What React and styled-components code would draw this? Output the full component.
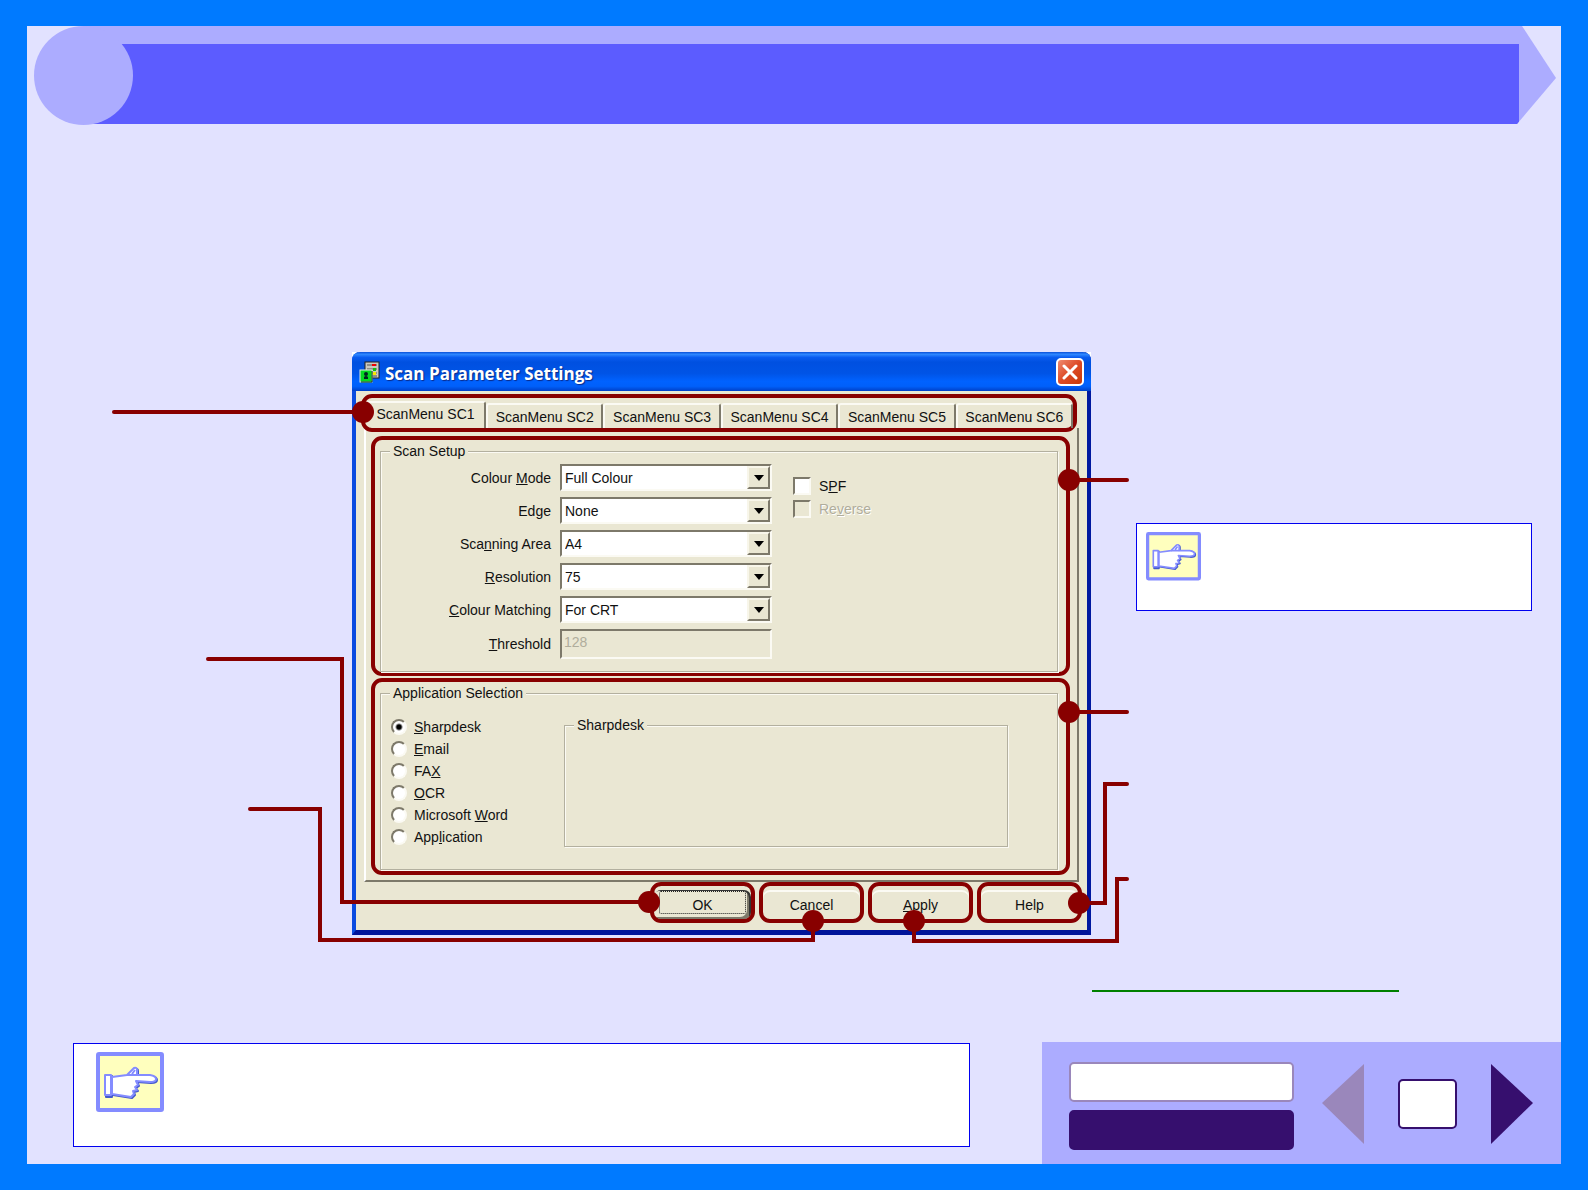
import { useState } from 'react';
import styled, { createGlobalStyle, css } from 'styled-components';

const colors = {
    frame: '#007aff',
    page: '#e2e2ff',
    lilac: '#acacff',
    violet: '#5c5cff',
    purple: '#360f6e',
    mauve: '#9a87bb',
    face: '#eae7d3',
    shadow: '#7d796a',
    edge: '#b3b09f',
    mark: '#880000',
}

const GlobalStyle = createGlobalStyle`
    *, *::before, *::after {
        box-sizing: border-box;
    }
    body {
        margin: 0;
        background: ${colors.frame};
        font-family: "Liberation Sans", Arial, sans-serif;
        font-size: 14px;
        line-height: 18px;
        color: #111;
    }
    button, input, select {
        font: inherit;
        color: inherit;
        margin: 0;
    }
`

const Page = styled.div`
    display: flex;
    flex-direction: column;
    min-height: 100vh;
    border: solid ${colors.frame};
    border-width: 26px 27px;
    background: ${colors.page};
`

const Header = styled.header`
    position: relative;
    padding: 0 5px 0 57px;
`

const Disc = styled.div`
    position: absolute;
    top: 0;
    left: 7px;
    width: 99px;
    height: 99px;
    border-radius: 50%;
    background: ${colors.lilac};
`

const Arrow = styled.div`
    padding: 18px 37px 0 0;
    background: ${colors.lilac};
    clip-path: polygon(0 0, calc(100% - 34px) 0, 100% 52px, calc(100% - 39px) 100%, 0 100%);
`

const Stripe = styled.div`
    height: 80px;
    background: ${colors.violet};
`

const Figure = styled.main`
    display: grid;
    grid-template-columns: 325px 739px minmax(0, 1fr);
    align-items: start;
    margin-top: 228px;
`

const Stage = styled.div`
    position: relative;
    grid-column: 2;
    background: #fff;
`

const Leaders = styled.svg`
    position: absolute;
    top: 0;
    left: 0;
    width: 100%;
    height: 100%;
    overflow: visible;
    pointer-events: none;
`

const Window = styled.section`
    border: solid #0a4be0;
    border-width: 0 4px 5px;
    border-right-color: #0018a0;
    border-bottom-color: #00149a;
    border-radius: 8px 8px 0 0;
    background: ${colors.face};
`

const TitleBar = styled.div`
    display: flex;
    align-items: center;
    gap: 5px;
    height: 39px;
    margin: 0 -4px;
    padding: 0 7px;
    border-radius: 8px 8px 0 0;
    background: linear-gradient(#0a50d8 0, #2f88ff 6%, #0a5cf0 14%, #0050e0 26%, #0054e6 55%, #0062ff 75%, #0060fa 88%, #0040c8 100%);
`

const Title = styled.h1`
    flex: 1;
    margin: 0;
    padding-top: 5px;
    color: #fff;
    font: bold 17px/24px "Open Sans", "Noto Sans", sans-serif;
    text-shadow: 1px 1px 1px #0a2a88;
`

const Close = styled.button`
    display: grid;
    place-items: center;
    width: 28px;
    height: 28px;
    padding: 0;
    border: 2px solid #fff;
    border-radius: 5px;
    background: linear-gradient(135deg, #ee8a70, #dd4a26 50%, #c83808);
`

// The dark red outline around every part that a leader points at
const marked = css`
    border: 4px solid ${colors.mark};
    border-radius: 11px;
`

const TabList = styled.div`
    ${marked}
    position: relative;
    display: flex;
    align-items: flex-end;
    height: 38px;
    margin: 3px 10px 0 5px;
`

const Tab = styled.button`
    flex: 1;
    height: 25px;
    padding: 1px 0 0;
    border: 0;
    border-top: 2px solid #fbfaf3;
    border-left: 2px solid #fbfaf3;
    border-right: 2px solid ${colors.shadow};
    border-radius: 3px 3px 0 0;
    background: none;
    white-space: nowrap;

    ${p => p.$active && css`
        flex: 0 0 121px;
        height: 27px;
        padding: 0 0 3px;
        border-left-color: transparent;
    `}
`

const TabPanel = styled.div`
    display: flex;
    flex-direction: column;
    gap: 2px;
    margin: -4px 8px 0;
    padding: 8px 7px 5px 5px;
    border: 2px solid ${colors.shadow};
    border-top: 0;
    border-left-color: #fff;
`

const Marked = styled.div`
    ${marked}
    padding: ${p => p.$padding};
`

const Group = styled.fieldset`
    min-width: 0;
    margin: 0;
    padding: 0;
    border: 1px solid ${colors.edge};
    box-shadow: 1px 1px 0 #fbfaf3, inset 1px 1px 0 #fbfaf3;
`

const Legend = styled.legend`
    margin-left: 9px;
    padding: 0 3px;
    background: ${colors.face};
`

const Setup = styled.div`
    display: grid;
    grid-template-columns: 391px 1fr;
    gap: 21px;
    padding: 4px 0 12px;
`

const Fields = styled.div`
    display: grid;
    grid-template-columns: 170px 1fr;
    gap: 6px 9px;
    align-items: center;
`

const FieldLabel = styled.label`
    text-align: right;
`

const sunken = css`
    border: 2px solid #fbfaf3;
    border-top-color: ${colors.shadow};
    border-left-color: ${colors.shadow};
`

const SelectBox = styled.div`
    ${sunken}
    display: grid;
    grid-template-columns: 1fr 23px;
    height: 27px;
    background: #fff;
`

const Select = styled.select`
    grid-area: 1 / 1 / 2 / 3;
    width: 100%;
    padding: 1px 3px 0;
    border: 0;
    background: none;
    appearance: none;
    outline: 0;
`

const DropButton = styled.span`
    grid-area: 1 / 2;
    display: grid;
    place-items: center;
    border: 2px solid ${colors.shadow};
    border-top-color: #f8f6ea;
    border-left-color: #f8f6ea;
    background: ${colors.face};
    pointer-events: none;
`

const TextInput = styled.input`
    ${sunken}
    width: 100%;
    height: 30px;
    padding: 0 2px 5px;
    background: ${colors.face};
    color: #b0ad9c;
`

const Checks = styled.div`
    display: flex;
    flex-direction: column;
    gap: 5px;
    padding-top: 13px;
`

const Option = styled.label`
    display: flex;
    align-items: center;
    gap: ${p => p.$gap};
    height: ${p => p.$height};
    ${p => p.$disabled && 'color: #b0ad9c; text-shadow: 1px 1px 0 #fff;'}
`

const Checkbox = styled.input`
    ${sunken}
    appearance: none;
    width: 18px;
    height: 18px;
    background: ${p => p.disabled ? colors.face : '#fff'};

    &:checked {
        box-shadow: inset 0 0 0 3px #fff, inset 0 0 0 9px #111;
    }
`

const Radio = styled.input`
    ${sunken}
    appearance: none;
    width: 16px;
    height: 16px;
    border-radius: 50%;
    background: #fff;

    &:checked {
        background: radial-gradient(circle, #000 0 2px, #fff 4px);
    }
`

const Applications = styled.div`
    display: grid;
    grid-template-columns: 183px 1fr;
    padding: 14px 49px 21px 0;
`

const RadioList = styled.div`
    padding-left: 10px;
`

const Preview = styled(Group)`
    height: 131px;
`

const Actions = styled.div`
    display: flex;
    justify-content: flex-end;
    gap: 4px;
    padding: 0 5px 7px;
`

const Action = styled.button`
    ${marked}
    width: 105px;
    height: 41px;
    padding: 5px 0 0;
    background: ${colors.face};
    box-shadow: inset 0 4px 0 ${colors.face}, inset 0 6px 0 #fbfaf3;

    ${p => p.$isDefault && css`
        box-shadow: inset 0 4px 0 ${colors.face}, inset -2px 5px 0 #333, inset -4px -2px 0 ${colors.shadow};
        outline: 1px dotted #222;
        outline-offset: -10px;
    `}
`

const Note = styled.aside`
    border: 1px solid #0000f0;
    background: #fff;
`

const SideNote = styled(Note)`
    height: 88px;
    margin: 171px 29px 0 45px;
    padding: 8px 9px;
`

const FootNote = styled(Note)`
    flex: 1;
    height: 104px;
    margin: 1px 72px 0 46px;
    padding: 8px 22px;
`

const HandIcon = styled.svg`
    display: block;
    width: ${p => p.$width};
`

const MoreLink = styled.a`
    width: 307px;
    height: 24px;
    margin: 33px 0 50px 1065px;
    border-bottom: 2px solid #008000;
`

const Footer = styled.footer`
    display: flex;
    align-items: flex-start;
    margin-top: auto;
`

const Pager = styled.nav`
    display: flex;
    align-items: center;
    gap: 28px;
    height: 122px;
    padding: 2px 28px 0 27px;
    background: ${colors.lilac};
`

const PagerLinks = styled.div`
    display: flex;
    flex-direction: column;
    gap: 8px;
    padding-top: 4px;
`

const PagerButton = styled.button`
    width: 225px;
    height: 40px;
    border: 2px solid ${p => p.$dark ? colors.purple : colors.mauve};
    border-radius: 5px;
    background: ${p => p.$dark ? colors.purple : '#fff'};
`

const Steps = styled.div`
    display: flex;
    align-items: center;
    gap: 34px;
`

const Step = styled.button`
    padding: 0;
    border: 0;
    background: none;
    color: ${p => p.$dim ? colors.mauve : colors.purple};

    svg {
        display: block;
    }
`

const PageNumber = styled.output`
    width: 59px;
    height: 50px;
    border: 2px solid ${colors.purple};
    border-radius: 5px;
    background: #fff;
`

const TABS = ['ScanMenu SC1', 'ScanMenu SC2', 'ScanMenu SC3', 'ScanMenu SC4', 'ScanMenu SC5', 'ScanMenu SC6']

// an underscore stands before the access key
const FIELDS = [
    { id: 'mode', label: 'Colour _Mode', value: 'Full Colour' },
    { id: 'edge', label: 'Ed_ge', value: 'None' },
    { id: 'area', label: 'Sca_nning Area', value: 'A4' },
    { id: 'resolution', label: '_Resolution', value: '75' },
    { id: 'matching', label: '_Colour Matching', value: 'For CRT' },
]

const APPLICATIONS = ['_Sharpdesk', '_Email', 'FA_X', '_OCR', 'Microsoft _Word', 'App_lication']

const LEADERS = [
    { dot: [11, 60], path: 'M-238 60H11' },
    { dot: [717, 128], path: 'M775 128H717' },
    { dot: [717, 360], path: 'M775 360H717' },
    { dot: [297, 550], path: 'M-144 307H-10V550H297' },
    { dot: [461, 569], path: 'M-102 457H-32V588H461V569' },
    { dot: [562, 569], path: 'M775 527H765V589H562V569' },
    { dot: [727, 551], path: 'M775 432H753V551H727' },
]

function KeyText({ children }) {
    const [before, after] = children.split('_')
    return (
        <span>{before}<u>{after[0]}</u>{after.slice(1)}</span>
    )
}

function Hand({ width }) {
    const shape = 'M16 25L31 23L38 16Q41 15 41 18L41 23L54 23Q60 24 60 27Q60 30 54 30L40 29L42 33L39 35L41 38L37 39L38 42L35 45L16 42Z'
    return (
        <HandIcon $width={width} viewBox="0 0 68 60" aria-hidden="true">
            <rect x="2" y="2" width="64" height="56" rx="1" fill="#ffffbe" stroke="#848cff" strokeWidth="4" />
            <g transform="translate(1 1)" fill="#4459cc" stroke="#4459cc" strokeWidth="2" strokeLinejoin="round">
                <path d={shape} />
                <path d="M9 23H15V44H9Z" />
            </g>
            <g fill="#fff" stroke="#848cff" strokeWidth="2" strokeLinejoin="round">
                <path d={shape} />
                <path d="M9 23H15V43H9Z" />
                <path d="M31 23H41M36 22L39 18" fill="none" />
            </g>
        </HandIcon>
    )
}

function AppIcon() {
    return (
        <svg width="21" height="22" viewBox="0 0 21 22" aria-hidden="true">
            <rect x="6" y="1" width="14" height="16" fill="#c9c8c0" stroke="#222" />
            <path d="M8 4h10M8 8h10M8 12h10M8 15h10" stroke="#555" />
            <rect x="13" y="3" width="4" height="2" fill="#f00000" />
            <rect x="14" y="7" width="3" height="3" fill="#10c010" />
            <rect x="14" y="11" width="3" height="3" fill="#f8e800" />
            <rect x="1" y="9" width="12" height="12" fill="#04d820" stroke="#dfe8df" />
            <path d="M2 21H13V10" fill="none" stroke="#033a08" />
            <path d="M5 18V16Q7 14 9 16V18Z" fill="#022" />
            <circle cx="7" cy="13" r="2" fill="#022" />
        </svg>
    )
}

export default function App() {
    const [tab, setTab] = useState(TABS[0])
    const [application, setApplication] = useState(APPLICATIONS[0])

    return (
        <Page>
            <GlobalStyle />
            <Header>
                <Arrow><Stripe /></Arrow>
                <Disc />
            </Header>

            <Figure>
                <Stage>
                    <Window>
                        <TitleBar>
                            <AppIcon />
                            <Title>Scan Parameter Settings</Title>
                            <Close aria-label="Close">
                                <svg width="16" height="16" viewBox="0 0 16 16">
                                    <path d="M2 2L14 14M14 2L2 14" stroke="#fff" strokeWidth="3" strokeLinecap="round" />
                                </svg>
                            </Close>
                        </TitleBar>

                        <TabList role="tablist">
                            {TABS.map(name => (
                                <Tab key={name} role="tab" aria-selected={name === tab} $active={name === tab} onClick={() => setTab(name)}>
                                    {name}
                                </Tab>
                            ))}
                        </TabList>

                        <TabPanel role="tabpanel">
                            <Marked $padding="2px 8px 0 5px">
                                <Group>
                                    <Legend>Scan Setup</Legend>
                                    <Setup>
                                        <Fields>
                                            {FIELDS.map(field => [
                                                <FieldLabel key={field.id} htmlFor={field.id}>
                                                    <KeyText>{field.label}</KeyText>
                                                </FieldLabel>,
                                                <SelectBox key={field.id + '-box'}>
                                                    <Select id={field.id}>
                                                        <option>{field.value}</option>
                                                    </Select>
                                                    <DropButton>
                                                        <svg width="10" height="6" viewBox="0 0 10 6"><path d="M0 0H10L5 6Z" /></svg>
                                                    </DropButton>
                                                </SelectBox>,
                                            ])}
                                            <FieldLabel htmlFor="threshold"><KeyText>_Threshold</KeyText></FieldLabel>
                                            <TextInput id="threshold" defaultValue="128" disabled />
                                        </Fields>
                                        <Checks>
                                            <Option $gap="8px" $height="18px">
                                                <Checkbox type="checkbox" />
                                                <KeyText>S_PF</KeyText>
                                            </Option>
                                            <Option $gap="8px" $height="18px" $disabled>
                                                <Checkbox type="checkbox" disabled />
                                                <KeyText>Re_verse</KeyText>
                                            </Option>
                                        </Checks>
                                    </Setup>
                                </Group>
                            </Marked>

                            <Marked $padding="2px 8px 1px 5px">
                                <Group>
                                    <Legend>Application Selection</Legend>
                                    <Applications>
                                        <RadioList>
                                            {APPLICATIONS.map(name => (
                                                <Option key={name} $gap="7px" $height="22px">
                                                    <Radio
                                                        type="radio"
                                                        name="application"
                                                        checked={name === application}
                                                        onChange={() => setApplication(name)}
                                                    />
                                                    <KeyText>{name}</KeyText>
                                                </Option>
                                            ))}
                                        </RadioList>
                                        <Preview>
                                            <Legend>{application.replace('_', '')}</Legend>
                                        </Preview>
                                    </Applications>
                                </Group>
                            </Marked>
                        </TabPanel>

                        <Actions>
                            <Action $isDefault>OK</Action>
                            <Action>Cancel</Action>
                            <Action><KeyText>_Apply</KeyText></Action>
                            <Action>Help</Action>
                        </Actions>
                    </Window>

                    <Leaders aria-hidden="true">
                        {LEADERS.map(({ dot, path }) => (
                            <g key={path}>
                                <path d={path} fill="none" stroke={colors.mark} strokeWidth="4" strokeLinecap="round" />
                                <circle cx={dot[0]} cy={dot[1]} r="11" fill={colors.mark} />
                            </g>
                        ))}
                    </Leaders>
                </Stage>
                <SideNote><Hand width="55px" /></SideNote>
            </Figure>

            <MoreLink href="#more" aria-label="More" />

            <Footer>
                <FootNote><Hand width="68px" /></FootNote>
                <Pager>
                    <PagerLinks>
                        <PagerButton aria-label="Contents" />
                        <PagerButton aria-label="Index" $dark />
                    </PagerLinks>
                    <Steps>
                        <Step aria-label="Previous page" $dim>
                            <svg width="42" height="82" viewBox="0 0 42 82"><path d="M42 1V81L0 40Z" fill="currentColor" /></svg>
                        </Step>
                        <PageNumber />
                        <Step aria-label="Next page">
                            <svg width="42" height="82" viewBox="0 0 42 82"><path d="M0 1V81L42 40Z" fill="currentColor" /></svg>
                        </Step>
                    </Steps>
                </Pager>
            </Footer>
        </Page>
    )
}
